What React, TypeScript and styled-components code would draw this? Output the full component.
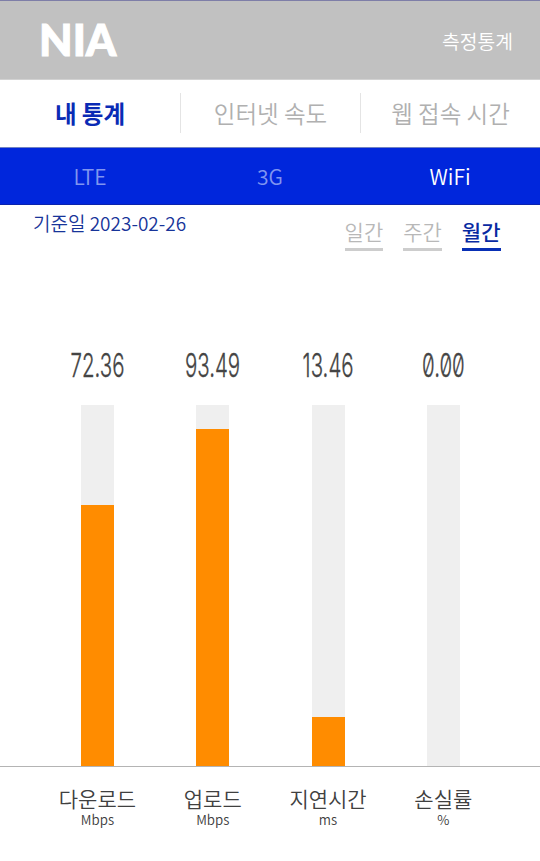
import React from 'react';
import styled, { createGlobalStyle } from 'styled-components';

const GlobalStyle = createGlobalStyle`
  *, *::before, *::after { box-sizing: border-box; }
  body {
    margin: 0;
    background: #fff;
    font-family: "Noto Sans CJK KR", "Noto Sans", sans-serif;
    font-weight: 350;
    line-height: 1;
  }
  button {
    padding: 0;
    border: 0;
    background: none;
    font: inherit;
    color: inherit;
    white-space: nowrap;
  }
`;

const Screen = styled.div`
  width: 540px;
  height: 861px;
  overflow: hidden;
  background: #fff;
`;

const Header = styled.header`
  display: flex;
  align-items: center;
  justify-content: space-between;
  height: 80px;
  padding: 0 27px 0 39px;
  border-top: 1px solid #7e7ea8;
  border-bottom: 1px solid #d2d2d2;
  background: #c1c1c1;
  color: #fff;
`;

const Logo = styled.div`
  padding-bottom: 1px;
  font: 900 43.5px/1 Lato, sans-serif;
  -webkit-text-stroke: 1px #fff;
`;

const HeaderLink = styled.button`
  padding-top: 3px;
  font-size: 19.3px;
`;

const Tabs = styled.nav`
  display: grid;
  grid-template-columns: repeat(3, 180px);
  align-items: center;
  height: 68px;
  border-bottom: 1px solid #7182c2;
`;

const Tab = styled.button<{ $active?: boolean }>`
  height: 40px;
  margin-top: -2px;
  padding-top: 3px;
  font-size: 23.5px;
  font-weight: ${(p) => (p.$active ? 700 : 350)};
  color: ${(p) => (p.$active ? '#0a2bb5' : '#b0b0b0')};

  & + & {
    border-left: 1px solid #e4e4e4;
  }
`;

const Networks = styled.nav`
  display: grid;
  grid-template-columns: repeat(3, 180px);
  height: 57px;
  background: #0026dc;
  border-bottom: 1px solid #0a23ad;
`;

const Network = styled.button<{ $active?: boolean }>`
  font-size: 21px;
  color: ${(p) => (p.$active ? '#fff' : '#8095f0')};
`;

const Filters = styled.section`
  display: flex;
  justify-content: space-between;
  height: 200px;
  padding: 0 39.5px 0 33px;
`;

const BaseDate = styled.div`
  padding-top: 8px;
  font-size: 19px;
  color: #173499;
`;

const Periods = styled.div`
  display: flex;
  align-items: flex-start;
  gap: 20px;
  padding-top: 15px;
`;

const Period = styled.button<{ $active?: boolean }>`
  height: 31px;
  padding-bottom: 6px;
  border-bottom: 3px solid ${(p) => (p.$active ? '#082fb5' : '#cdcdcd')};
  font-size: 21px;
  font-weight: ${(p) => (p.$active ? 500 : 350)};
  color: ${(p) => (p.$active ? '#082aa2' : '#b8b8b8')};
`;

const Chart = styled.section`
  height: 361px;
`;

const Columns = styled.div`
  display: grid;
  grid-template-columns: repeat(4, 115.3px);
  padding-left: 39.8px;
`;

const Plot = styled(Columns)`
  margin-top: -54px;
  border-bottom: 1px solid #b4b4b4;
`;

const Metric = styled.div`
  display: flex;
  flex-direction: column;
  align-items: center;
`;

const Value = styled.div`
  height: 54px;
  font: 300 33px/28px Inter, sans-serif;
  font-feature-settings: "zero" 1;
  -webkit-text-stroke: 0.35px #444;
  color: #444;
  transform: scaleX(0.62);
`;

const Track = styled.div`
  display: flex;
  align-items: flex-end;
  width: 33px;
  height: 361px;
  background: #efefef;
`;

const Fill = styled.div`
  width: 100%;
  background: #ff8c00;
`;

const Labels = styled(Columns)`
  padding-top: 21px;
  color: #404040;
`;

const Name = styled.div`
  font-size: 21px;
`;

const Unit = styled.div`
  margin-top: 4px;
  font-size: 13.3px;
`;

const metrics = [
  { name: '다운로드', unit: 'Mbps', value: '72.36', fill: 72.36 },
  { name: '업로드', unit: 'Mbps', value: '93.49', fill: 93.49 },
  { name: '지연시간', unit: 'ms', value: '13.46', fill: 13.46 },
  { name: '손실률', unit: '%', value: '0.00', fill: 0 },
];

export default function App() {
  return (
    <>
      <GlobalStyle />
      <Screen>
        <Header>
          <Logo>NIA</Logo>
          <HeaderLink>측정통계</HeaderLink>
        </Header>
        <Tabs>
          <Tab $active>내 통계</Tab>
          <Tab>인터넷 속도</Tab>
          <Tab>웹 접속 시간</Tab>
        </Tabs>
        <Networks>
          <Network>LTE</Network>
          <Network>3G</Network>
          <Network $active>WiFi</Network>
        </Networks>
        <Filters>
          <BaseDate>기준일 2023-02-26</BaseDate>
          <Periods>
            <Period>일간</Period>
            <Period>주간</Period>
            <Period $active>월간</Period>
          </Periods>
        </Filters>
        <Chart>
          <Plot>
            {metrics.map((m) => (
              <Metric key={m.name}>
                <Value>{m.value}</Value>
                <Track>
                  <Fill style={{ height: `${m.fill}%` }} />
                </Track>
              </Metric>
            ))}
          </Plot>
          <Labels>
            {metrics.map((m) => (
              <Metric key={m.name}>
                <Name>{m.name}</Name>
                <Unit>{m.unit}</Unit>
              </Metric>
            ))}
          </Labels>
        </Chart>
      </Screen>
    </>
  );
}
